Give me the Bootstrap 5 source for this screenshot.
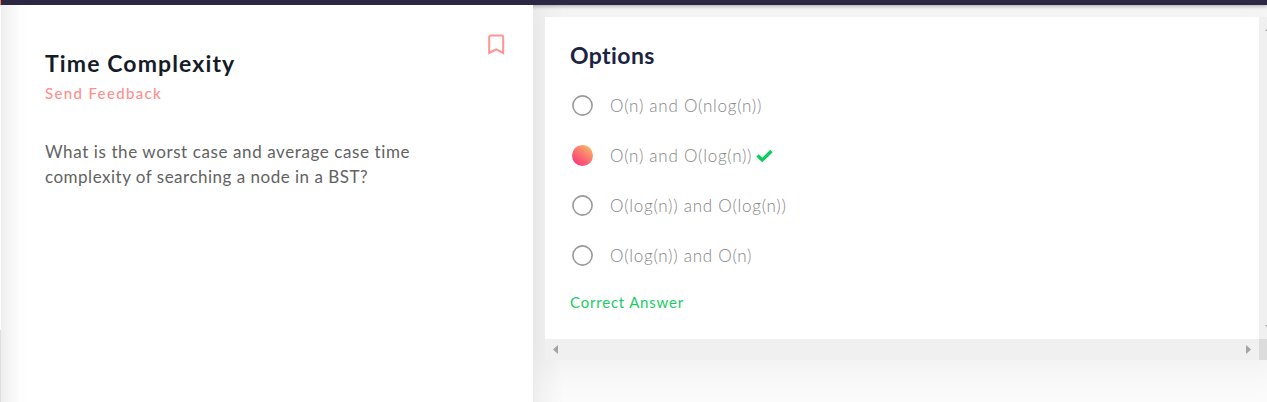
<!DOCTYPE html>
<html lang="en">
<head>
<meta charset="utf-8">
<title>Time Complexity</title>
<meta name="viewport" content="width=device-width, initial-scale=1">
<link href="https://cdn.jsdelivr.net/npm/bootstrap@5.3.0/dist/css/bootstrap.min.css" rel="stylesheet">
<style>
body{font-family:"Lato","Open Sans",sans-serif;background:#fbfbfb;color:#626262;font-size:17px}
.topbar{height:5px;background:#2b2744;border-left:1px solid #ff735c;box-shadow:0 1px 4px rgba(0,0,0,.35);z-index:1;position:relative}
.problem{width:533px;padding:42px 45px 0 44px;border-left:1px solid #fff;background:linear-gradient(90deg,#eee 0,#f5f5f5 8px,#fcfcfc 18px,#fff 28px) #fff;position:relative;z-index:2}
.problem::before{content:"";position:absolute;left:-1px;top:325px;bottom:0;width:1px;background:#dedede}
h1,h2{font-size:23px;line-height:33px;font-weight:700;margin:0}
h1{color:#161b28;letter-spacing:1.12px}
h2{color:#1b2441;letter-spacing:.4px}
.feedback{font-size:15px;line-height:24px;color:#ff8f8d;letter-spacing:1.35px;font-weight:500;text-decoration:none;margin-top:1px;width:max-content}
.question{line-height:25px;margin:34px 0 0;letter-spacing:.6px}
.question .tail{letter-spacing:.5px}
.bookmark{position:absolute;left:486px;top:29px}
.workspace{padding:12px 0 0 12px;background:linear-gradient(90deg,rgba(0,0,0,.055),rgba(0,0,0,.03) 10px,transparent 30px) #fbfbfb}
.pane{height:343px;box-shadow:0 0 32px 12px rgba(0,0,0,.045);background:#f0f0f0}
.answers{width:714px;height:322px;padding:22px 25px;background:#fff}
.choice{height:50px;font-weight:300;color:#858585;gap:17px;padding-left:2px;letter-spacing:.74px}
.choices{margin-top:9px}
.dial{margin-bottom:2px}
.result{font-size:15px;line-height:22px;color:#1acb65;margin-top:10px;letter-spacing:.8px}
.hbar{width:714px;height:21px;padding:0 8px}
.vbar{width:8px}
.corner{height:21px;background:#dcdcdc}
svg{display:block;flex:none}
</style>
</head>
<body class="vh-100 overflow-hidden d-flex flex-column">
<header class="topbar flex-shrink-0"></header>
<main class="d-flex flex-grow-1">
  <section class="problem flex-shrink-0">
    <h1>Time Complexity</h1>
    <a class="feedback d-block">Send Feedback</a>
    <p class="question"><span>What is the worst case and average case time</span><br><span class="tail">complexity of searching a node in a BST?</span></p>
    <svg class="bookmark" width="18" height="22" viewBox="0 0 18 22" fill="none" stroke="#ff9492" stroke-width="2"><path d="M2.2 19V3Q2.2 1.5 3.5 1.5H15Q16.2 1.5 16.2 3V19L9.2 15.3Z"/></svg>
  </section>
  <section class="workspace flex-grow-1">
    <div class="pane d-flex">
      <div class="flex-shrink-0">
        <div class="answers">
          <h2>Options</h2>
          <div class="choices">
            <div class="choice d-flex align-items-center"><svg class="dial" width="21" height="21" fill="none" stroke="#999" stroke-width="1.6"><circle cx="10.5" cy="10.5" r="9.6"/></svg><span>O(n) and O(nlog(n))</span></div>
            <div class="choice d-flex align-items-center"><svg class="dial" width="21" height="21"><defs><linearGradient id="sunset" x1="0.15" y1="0.95" x2="0.85" y2="0.05"><stop offset="0" stop-color="#fb3578"/><stop offset=".5" stop-color="#fb7271"/><stop offset="1" stop-color="#fbb765"/></linearGradient></defs><circle cx="10.5" cy="10.5" r="10.5" fill="url(#sunset)"/></svg><span class="d-flex align-items-center gap-1">O(n) and O(log(n))<svg width="17" height="14" viewBox="0 0 17 14" fill="none" stroke="#09cd5d" stroke-width="3.3"><path d="M1.5 6.5L6.3 11L15.5 2"/></svg></span></div>
            <div class="choice d-flex align-items-center"><svg class="dial" width="21" height="21" fill="none" stroke="#999" stroke-width="1.6"><circle cx="10.5" cy="10.5" r="9.6"/></svg><span>O(log(n)) and O(log(n))</span></div>
            <div class="choice d-flex align-items-center"><svg class="dial" width="21" height="21" fill="none" stroke="#999" stroke-width="1.6"><circle cx="10.5" cy="10.5" r="9.6"/></svg><span>O(log(n)) and O(n)</span></div>
          </div>
          <div class="result">Correct Answer</div>
        </div>
        <div class="hbar d-flex justify-content-between align-items-center">
          <svg width="5" height="9" fill="#a3a3a3"><path d="M5 0V9L0 4.5Z"/></svg>
          <svg width="5" height="9" fill="#a3a3a3"><path d="M0 0V9L5 4.5Z"/></svg>
        </div>
      </div>
      <div class="vbar d-flex flex-column">
        <svg class="ms-auto" width="2" height="14" fill="#a3a3a3"><path d="M0 14L2 12V14Z"/></svg>
        <svg class="ms-auto mt-auto" width="2" height="14" fill="#a3a3a3"><path d="M0 0H2V2Z"/></svg>
        <div class="corner"></div>
      </div>
    </div>
  </section>
</main>
<script src="https://cdn.jsdelivr.net/npm/bootstrap@5.3.0/dist/js/bootstrap.bundle.min.js"></script>
</body>
</html>
